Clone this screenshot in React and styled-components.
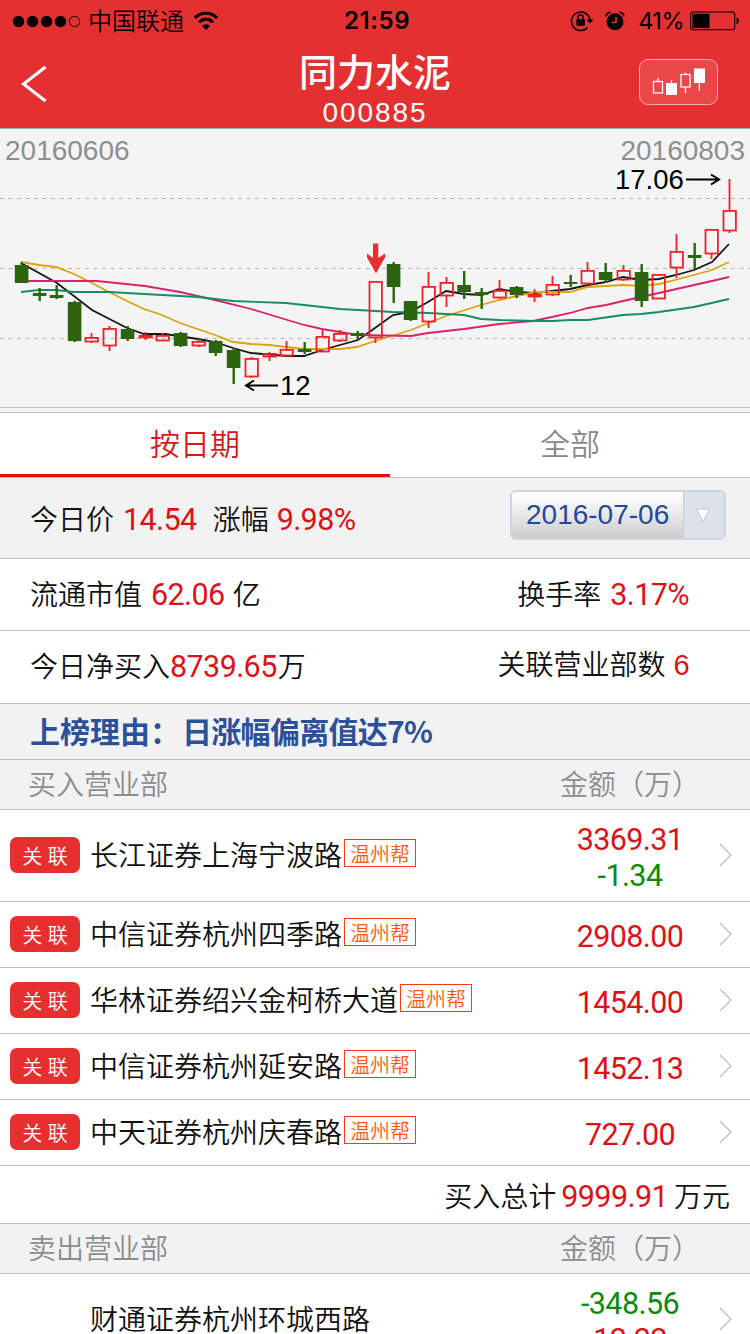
import React from 'react'
import styled, { createGlobalStyle } from 'styled-components'

const GlobalStyle = createGlobalStyle`
  * {
    box-sizing: border-box;
  }
  body {
    margin: 0;
    background: #fff;
    font-family: "Liberation Sans", "Noto Sans CJK SC", sans-serif;
    color: #111;
  }
`

const Page = styled.div`
  width: 750px;
  height: 1334px;
  overflow: hidden;
  display: flex;
  flex-direction: column;

  > * {
    flex-shrink: 0;
  }
`

const Top = styled.header`
  height: 129px;
  background: #e53032;
  border-bottom: 1px solid #8fb5aa;
`

const StatusBar = styled.div`
  height: 40px;
  display: grid;
  grid-template-columns: 1fr auto 1fr;
  align-items: center;
  color: #000;
`

const StatusLeft = styled.div`
  display: flex;
  align-items: center;
  padding-left: 12px;
`

const Carrier = styled.span`
  margin: 0 9px 0 6px;
  padding-bottom: 2px;
  font: 350 24px/38px "Noto Sans CJK SC", sans-serif;
`

const Clock = styled.span`
  font: 600 24px/40px Inter, sans-serif;
  letter-spacing: 0.6px;
  padding: 1px 0 0 4px;
`

const StatusRight = styled.div`
  display: flex;
  align-items: center;
  justify-content: flex-end;
  padding-right: 10px;
`

const Percent = styled.span`
  margin: 0 6px 0 13px;
  font: 400 23.5px/40px Inter, sans-serif;
  letter-spacing: -0.5px;
`

const NavBar = styled.div`
  height: 88px;
  padding: 0 32px 0 21px;
  display: grid;
  grid-template-columns: 96px 1fr 80px;
`

const BackButton = styled.button`
  height: 88px;
  padding: 0;
  border: none;
  background: none;
  display: flex;
  align-items: center;
`

const TitleBox = styled.div`
  text-align: center;
  color: #fff;
  padding-right: 5px;
`

const Title = styled.h1`
  margin: 0 0 3px;
  padding-top: 5px;
  font: 500 38px/50px "Noto Sans CJK SC", sans-serif;
`

const Code = styled.div`
  font-size: 28px;
  line-height: 30px;
  letter-spacing: 1.9px;
`

const KlineButton = styled.button`
  width: 79px;
  height: 46px;
  margin: 19px 0 0 1px;
  padding: 0;
  border: 1px solid #f6a9aa;
  border-radius: 9px;
  background: #e94748;
  display: block;
`

const ChartPanel = styled.section`
  height: 279px;
  background: #f4f4f4;
  border-bottom: 1px solid #bfbfbf;
  display: grid;

  > * {
    grid-area: 1 / 1;
  }
`

const DateRange = styled.div`
  display: flex;
  justify-content: space-between;
  padding: 5px 5px 0;
  color: #8e8e8e;
  font-size: 28px;
  line-height: 34px;
`

const Tabs = styled.nav`
  height: 70px;
  display: flex;
  border-top: 4px solid #f4f4f4;
  border-bottom: 1px solid #bfbfbf;
`

const Tab = styled.div`
  flex: ${({ $active }) => ($active ? '0 0 390px' : '1')};
  height: 65px;
  border-top: 1px solid #bfbfbf;
  border-bottom: ${({ $active }) => ($active ? '3px solid #e50f14' : 'none')};
  color: ${({ $active }) => ($active ? '#e01418' : '#888')};
  font: 350 30px/58px "Noto Sans CJK SC", sans-serif;
  text-align: center;
`

const Row = styled.div`
  height: ${({ $height }) => $height}px;
  padding: 0 60px 0 30px;
  display: flex;
  justify-content: ${({ $end }) => ($end ? 'flex-end' : 'space-between')};
  align-items: center;
  background: ${({ $shade }) => ($shade ? '#f2f2f2' : '#fff')};
  border-bottom: 1px solid #bfbfbf;
`

const InfoRow = styled(Row)`
  padding-right: ${({ $right = 61 }) => $right}px;
`

const Label = styled.span`
  display: inline-flex;
  align-items: center;
  margin-bottom: ${({ $lift = 0 }) => $lift}px;
  font: 350 28px/40px "Noto Sans CJK SC", sans-serif;
  white-space: pre;
`

const Num = styled.span`
  font: 400 30.5px/36px Roboto, sans-serif;
  letter-spacing: -0.6px;
  color: ${({ $down }) => ($down ? '#0c8c0c' : '#de1216')};
`

const LabelNum = styled(Num)`
  padding-top: 4px;
  margin: ${({ $gap = '0' }) => $gap};
`

const Count = styled(LabelNum)`
  font: 400 29px/36px "Liberation Sans", sans-serif;
`

const DateSelect = styled.div`
  width: 216px;
  height: 50px;
  margin-top: -6px;
  display: flex;
  border: 2px solid #ced5df;
  border-radius: 6px;
  overflow: hidden;
`

const DateValue = styled.span`
  flex: 1;
  padding-left: 14px;
  border-right: 1px solid #c5cbd5;
  background: linear-gradient(#fff, #f0f0f0 35%, #cdcdcd);
  color: #24489a;
  font-size: 28px;
  line-height: 45px;
  white-space: nowrap;
`

const DateArrow = styled.span`
  width: 40px;
  padding-right: 2px;
  background: #dde1e9;
  display: flex;
  align-items: center;
  justify-content: center;
`

const Reason = styled.span`
  margin-bottom: 4px;
  color: #2b509c;
  font: 600 30px/48px "Noto Sans CJK SC", sans-serif;

  em {
    margin-left: 2px;
    font-style: normal;
    letter-spacing: -0.7px;
  }
`

const Heading = styled.span`
  margin: 0 0 4px -2px;
  color: #8c8c8c;
  font: 350 28px/44px "Noto Sans CJK SC", sans-serif;
`

const AmountHeading = styled(Heading)`
  margin-right: -10px;
`

const BranchRow = styled(Row)`
  padding: 0 17px 2px 10px;
  justify-content: flex-start;
`

const Linked = styled.span`
  width: 70px;
  height: 36px;
  margin-right: 10px;
  border-radius: 7px;
  background: ${({ $hidden }) => ($hidden ? 'transparent' : '#e72f30')};
  color: #fff;
  font: 350 20px/37px "Noto Sans CJK SC", sans-serif;
  word-spacing: 1px;
  text-align: center;
  white-space: nowrap;
`

const Branch = styled.span`
  margin-bottom: 1px;
  font: 350 28px/40px "Noto Sans CJK SC", sans-serif;
  white-space: nowrap;
`

const Tag = styled.span`
  width: 72px;
  height: 28px;
  margin: -4px 0 0 2px;
  border: 1px solid #ff3a12;
  color: #ff5a0a;
  font: 350 20px/27px "Noto Sans CJK SC", sans-serif;
  text-align: center;
`

const Amounts = styled.div`
  width: 140px;
  margin-left: auto;
  padding-top: 6px;
  display: flex;
  flex-direction: column;
  align-items: center;
`

const Arrow = styled.svg`
  margin-left: 17px;
`

// x centre, wick top, wick bottom, body top, body bottom, up or down
const candles = [
  [21.5, 262, 283, 265, 283, 'd'],
  [39.5, 288, 301, 293, 296, 'd'],
  [56.5, 285, 299, 295, 298, 'd'],
  [74.5, 301, 342, 302, 341, 'd'],
  [91.5, 333, 343, 337, 342, 'u'],
  [109.5, 326, 351, 328, 346, 'u'],
  [127.5, 326, 341, 329, 339, 'd'],
  [145.5, 332, 340, 335, 338, 'u'],
  [162.5, 333, 341, 335, 341, 'u'],
  [180.5, 332, 347, 333, 346, 'd'],
  [198.5, 339, 347, 341, 346, 'u'],
  [215.5, 340, 356, 341, 353, 'd'],
  [233.5, 348, 384, 350, 368, 'd'],
  [251.5, 357, 378, 358, 377, 'u'],
  [269.5, 352, 361, 353, 357, 'u'],
  [286.5, 341, 356, 349, 356, 'u'],
  [304.5, 342, 354, 349, 352, 'd'],
  [322.5, 330, 352, 336, 352, 'u'],
  [340, 330, 342, 333, 341, 'u'],
  [357.5, 331, 340, 333, 336, 'd'],
  [375.5, 281, 343, 281, 338, 'u'],
  [393.5, 262, 303, 264, 287, 'd'],
  [410.5, 301, 321, 301, 320, 'd'],
  [428.5, 272, 328, 286, 322, 'u'],
  [446.5, 277, 307, 282, 296, 'u'],
  [464, 271, 299, 285, 292, 'd'],
  [481.5, 288, 309, 292, 295, 'd'],
  [499.5, 280, 299, 290, 298, 'u'],
  [516.5, 286, 298, 287, 295, 'd'],
  [534.5, 289, 302, 294, 297, 'u'],
  [552.5, 276, 296, 284, 295, 'u'],
  [570.5, 275, 287, 282, 284, 'd'],
  [587.5, 262, 285, 270, 284, 'u'],
  [605.5, 263, 283, 272, 280, 'd'],
  [623.5, 265, 281, 270, 280, 'u'],
  [641.5, 264, 307, 272, 301, 'd'],
  [658.5, 274, 299, 274, 299, 'u'],
  [676.5, 234, 278, 251, 268, 'u'],
  [694.5, 243, 269, 255, 258, 'd'],
  [711.5, 229, 259, 229, 254, 'u'],
  [729.5, 179, 233, 210, 231, 'u'],
]

const averages = [
  {
    color: '#161616',
    points: '21,263 57,283 92,310 127,328 144,334 165,334 198,339 215,342 233,348 251,353 287,356 304,356 322,350 358,340 375,328 393,315 410,312 428,302 446,291 464,294 482,295 499,289 517,292 535,293 552,291 570,289 588,285 606,282 623,277 641,280 659,279 676,275 694,270 712,262 729,244',
  },
  {
    color: '#dba40c',
    points: '21,262 39,265 56,267 74,274 92,283 109,292 127,301 144,309 162,315 180,323 215,335 233,342 251,344 269,345 304,349 340,349 357,347 375,341 411,330 446,316 481,305 499,300 517,296 535,292 570,292 588,287 623,285 641,286 659,284 694,275 712,270 729,262',
  },
  {
    color: '#da206f',
    points: '21,281 97,281 145,286 180,292 215,300 251,309 304,325 322,329 358,335 411,336 428,333 464,329 499,324 533,321 552,317 570,313 588,308 606,305 623,301 641,297 659,293 694,285 712,281 729,277',
  },
  {
    color: '#158c68',
    points: '21,292 39,290 56,290 74,292 109,292 162,295 198,297 233,301 286,303 340,309 393,312 428,313 464,315 481,319 499,320 535,321 552,321 570,320 588,320 623,315 641,314 659,312 694,307 729,299',
  },
]

const Candle = ({ data }) => {
  const [x, high, low, top, bottom, type] = data
  if (type === 'd') {
    return (
      <g fill="#2c6410">
        <rect x={x - 1} y={high} width="2.4" height={low - high} />
        <rect x={x - 6.7} y={top} width="13.6" height={bottom - top} />
      </g>
    )
  }
  return (
    <g stroke="#f02226" strokeWidth="1.8" fill="none">
      <path d={`M${x} ${high}V${top}M${x} ${bottom}V${low}`} />
      <rect x={x - 6} y={top + 0.9} width="12.4" height={Math.max(bottom - top - 1.4, 1)} />
    </g>
  )
}

const KlineChart = () => (
  <svg width="750" height="278" viewBox="0 129 750 278">
    {[198.5, 268.5, 338.5].map((y) => (
      <path key={y} d={`M0 ${y}H750`} stroke="#b5b5b5" strokeDasharray="4 4.5" />
    ))}
    {averages.map(({ color, points }) => (
      <polyline key={color} points={points} fill="none" stroke={color} strokeWidth="1.8" />
    ))}
    {candles.map((c) => (
      <Candle key={c[0]} data={c} />
    ))}
    <path d="M373 243.500h5.300V258l6.700-4.500v4L376 273.500l-9-16v-4l6 4.500Z" fill="#ea2e30" />
    <g fill="none" stroke="#000" strokeWidth="2">
      <path d="M686 179.500H719M711 174.500L719 179.500L711 184.500" />
      <path d="M278 385.500H246M254 380.500L246 385.500L254 390.500" />
    </g>
    <g fontFamily="Liberation Sans, sans-serif" fontSize="27.500" fill="#000">
      <text x="615" y="189">17.06</text>
      <text x="280" y="395">12</text>
    </g>
  </svg>
)

const SignalDots = () => (
  <svg width="70" height="14" viewBox="0 0 70 14">
    {[7, 21, 35, 49].map((x) => (
      <circle key={x} cx={x - 0.5} cy="7.500" r="5.700" />
    ))}
    <circle cx="62.500" cy="7.500" r="5.200" fill="none" stroke="#000" />
  </svg>
)

const Wifi = () => (
  <svg width="26" height="20" viewBox="0 0 26 20" fill="none" stroke="#000" strokeWidth="3">
    <path d="M1.800 6.900C8 .6 18 .6 24.200 6.900M6 11.200C10 7.300 16 7.300 20 11.200" />
    <path d="M13 19L9 14.900Q13 11.800 17 14.900Z" fill="#000" stroke="none" />
  </svg>
)

const LockSvg = styled.svg`
  margin-right: 11px;
`

const RotationLock = () => (
  <LockSvg width="24" height="22" viewBox="0 0 24 22">
    <path d="M17.600 17.600A9.300 9.300 0 1 1 20 10" fill="none" stroke="#000" strokeWidth="1.500" />
    <path d="M16.500 9.500H23.500L20 13.500Z" />
    <rect x="6.300" y="9.300" width="8.600" height="6.400" rx="0.700" />
    <path d="M8 9.500V7.300a2.500 2.500 0 0 1 5.100 0v2.200" fill="none" stroke="#000" strokeWidth="1.400" />
  </LockSvg>
)

const Alarm = () => (
  <svg width="20" height="20" viewBox="0 0 20 20">
    <circle cx="10" cy="10.800" r="8.500" />
    <path d="M1 5.500Q1.500 2 5.500 1M19 5.500Q18.500 2 14.500 1" fill="none" stroke="#000" strokeWidth="1.700" />
    <path d="M11 6V11.500H6.500" fill="none" stroke="#e53032" strokeWidth="1.600" />
  </svg>
)

const Battery = () => (
  <svg width="50" height="20" viewBox="0 0 50 20">
    <rect x="0.700" y="1" width="44" height="17.800" rx="2.500" fill="none" stroke="#000" strokeWidth="1.100" />
    <rect x="2.500" y="2.800" width="17" height="14.200" />
    <path d="M46.500 6.500q2.500.8 2.500 3.300t-2.500 3.500Z" />
  </svg>
)

const KlineIcon = () => (
  <svg width="77" height="44" viewBox="640 60 77 44" fill="none" stroke="#fff" strokeWidth="1.300">
    <rect x="653.500" y="81.500" width="9" height="11.500" />
    <path d="M658 78v3.500M671.500 80v3M685.500 72.500v2M685.500 87.500v5.500M699.300 82v9" />
    <rect x="666" y="83" width="11" height="12" fill="#fff" stroke="none" />
    <rect x="681" y="74.500" width="9" height="12.500" />
    <rect x="694" y="68.500" width="11" height="14.500" fill="#fff" stroke="none" />
  </svg>
)

const buyers = [
  { name: '长江证券上海宁波路', amounts: ['3369.31', '-1.34'], height: 92 },
  { name: '中信证券杭州四季路', amounts: ['2908.00'] },
  { name: '华林证券绍兴金柯桥大道', amounts: ['1454.00'] },
  { name: '中信证券杭州延安路', amounts: ['1452.13'] },
  { name: '中天证券杭州庆春路', amounts: ['727.00'] },
]

const BranchItem = ({ name, amounts, height = 66, linked = true }) => (
  <BranchRow $height={height}>
    <Linked $hidden={!linked}>{linked && '关 联'}</Linked>
    <Branch>{name}</Branch>
    {linked && <Tag>温州帮</Tag>}
    <Amounts>
      {amounts.map((a) => (
        <Num key={a} $down={a.startsWith('-')}>{a}</Num>
      ))}
    </Amounts>
    <Arrow width="16" height="24" viewBox="0 0 16 24">
      <path d="M3 1L14 12L3 23" fill="none" stroke="#b8b8b8" strokeWidth="1.100" />
    </Arrow>
  </BranchRow>
)

const App = () => {
  return (
    <Page>
      <GlobalStyle />
      <Top>
        <StatusBar>
          <StatusLeft>
            <SignalDots />
            <Carrier>中国联通</Carrier>
            <Wifi />
          </StatusLeft>
          <Clock>21:59</Clock>
          <StatusRight>
            <RotationLock />
            <Alarm />
            <Percent>41%</Percent>
            <Battery />
          </StatusRight>
        </StatusBar>
        <NavBar>
          <BackButton>
            <svg width="27" height="40" viewBox="0 0 27 40">
              <path d="M24.500 3L2.500 20L24.500 37" fill="none" stroke="#fff" strokeWidth="3" />
            </svg>
          </BackButton>
          <TitleBox>
            <Title>同力水泥</Title>
            <Code>000885</Code>
          </TitleBox>
          <KlineButton>
            <KlineIcon />
          </KlineButton>
        </NavBar>
      </Top>
      <ChartPanel>
        <KlineChart />
        <DateRange>
          <span>20160606</span>
          <span>20160803</span>
        </DateRange>
      </ChartPanel>
      <Tabs>
        <Tab $active>按日期</Tab>
        <Tab>全部</Tab>
      </Tabs>
      <InfoRow $height={81} $shade $right={24}>
        <Label>
          今日价<LabelNum $gap="0 16px 0 9px">14.54</LabelNum>涨幅<LabelNum $gap="0 0 0 8px">9.98%</LabelNum>
        </Label>
        <DateSelect>
          <DateValue>2016-07-06</DateValue>
          <DateArrow>
            <svg width="16" height="15" viewBox="0 0 16 15">
              <path d="M1.500 1H14.500L8 13.500Z" fill="#fff" stroke="#b9b9b9" strokeWidth="0.800" />
            </svg>
          </DateArrow>
        </DateSelect>
      </InfoRow>
      <InfoRow $height={72}>
        <Label $lift={4}>
          流通市值<LabelNum $gap="0 8px 0 9px">62.06</LabelNum>亿
        </Label>
        <Label $lift={4}>
          换手率<LabelNum $gap="0 0 0 9px">3.17%</LabelNum>
        </Label>
      </InfoRow>
      <InfoRow $height={73}>
        <Label $lift={4}>
          今日净买入<LabelNum $gap="0 1px 0 0">8739.65</LabelNum>万
        </Label>
        <Label $lift={8}>
          关联营业部数<Count $gap="0 0 0 8px">6</Count>
        </Label>
      </InfoRow>
      <Row $height={56} $shade>
        <Reason>上榜理由：<em>日涨幅偏离值达7%</em></Reason>
      </Row>
      <Row $height={50} $shade>
        <Heading>买入营业部</Heading>
        <AmountHeading>金额（万）</AmountHeading>
      </Row>
      {buyers.map((b) => (
        <BranchItem key={b.name} {...b} />
      ))}
      <InfoRow $height={58} $end $right={20}>
        <Label>
          买入总计<LabelNum $gap="0 6px 0 5px">9999.91</LabelNum>万元
        </Label>
      </InfoRow>
      <Row $height={50} $shade>
        <Heading>卖出营业部</Heading>
        <AmountHeading>金额（万）</AmountHeading>
      </Row>
      <BranchItem name="财通证券杭州环城西路" amounts={['-348.56', '12.22']} height={92} linked={false} />
    </Page>
  )
}

export default App
